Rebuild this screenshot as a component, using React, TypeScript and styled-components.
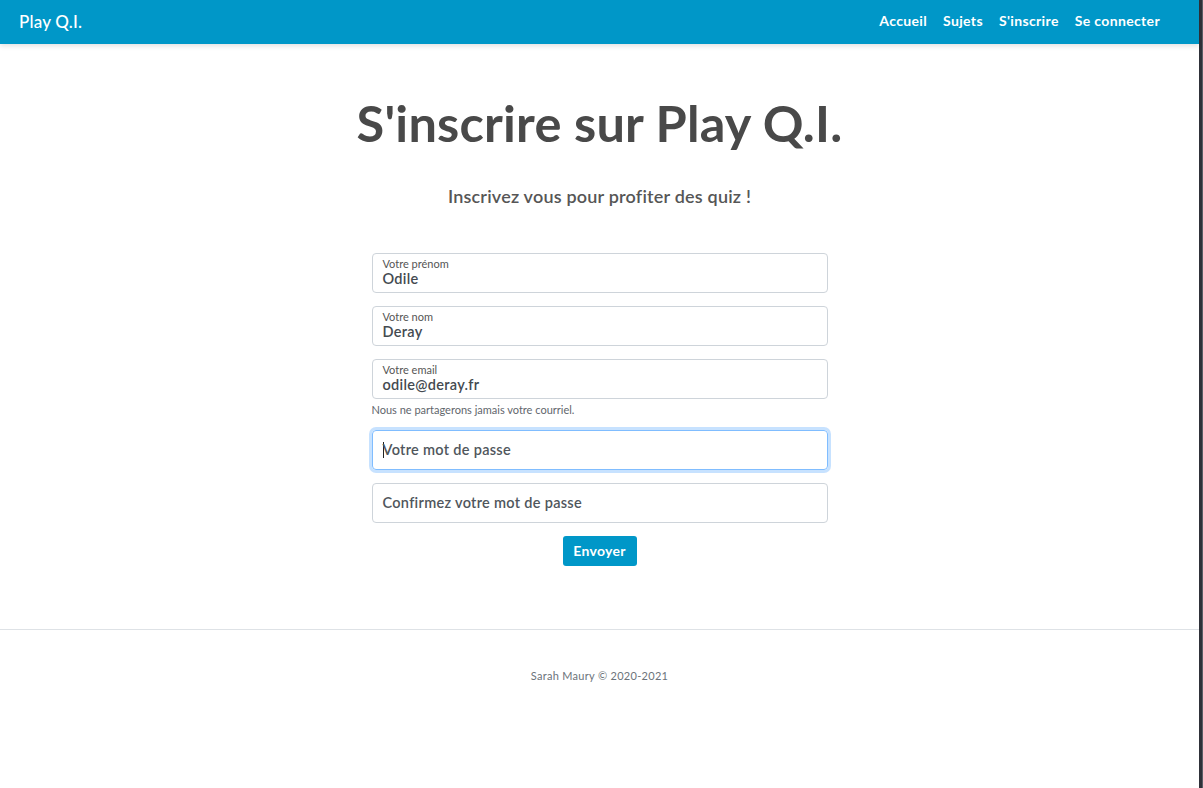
import styled, { createGlobalStyle } from "styled-components";

const GlobalStyle = createGlobalStyle`
  html, body {
    margin: 0;
    padding: 0;
    background: #fff;
  }
  body {
    font-family: Lato, "Open Sans", "Liberation Sans", sans-serif;
    color: #495057;
  }
`;

const Shell = styled.div`
  display: flex;
  min-height: 788px;
`;

const Page = styled.div`
  flex: 1;
  display: flex;
  flex-direction: column;
  min-width: 0;
`;

const Edge = styled.div`
  width: 3px;
  background: #2f3139;
  border-right: 1px solid #5a5d66;
`;

const Navbar = styled.nav`
  box-sizing: border-box;
  height: 44px;
  background: #0097c8;
  display: flex;
  align-items: center;
  justify-content: space-between;
  padding: 0 39px 4px 19px;
  box-shadow: 0 2px 5px rgba(0, 0, 0, 0.12);
  position: relative;
  z-index: 1;
`;

const Brand = styled.a`
  color: #fff;
  font-size: 17px;
  font-weight: 500;
  text-decoration: none;
  letter-spacing: 0.2px;
  margin-top: 3px;
`;

const NavLinks = styled.div`
  display: flex;
  gap: 16px;
`;

const NavLink = styled.a`
  color: #fff;
  font-size: 14px;
  font-weight: 700;
  text-decoration: none;
  letter-spacing: 0.35px;
`;

const Main = styled.main`
  display: flex;
  flex-direction: column;
  align-items: center;
  padding: 51px 0 63px;
`;

const Title = styled.h1`
  margin: 0;
  font-size: 50.5px;
  line-height: 56px;
  font-weight: 700;
  color: #494949;
  letter-spacing: 0.2px;
`;

const Subtitle = styled.p`
  margin: 33px 0 0;
  font-size: 18px;
  line-height: 24px;
  font-weight: 600;
  color: #565656;
  letter-spacing: 0.2px;
`;

const Form = styled.form`
  width: 456px;
  margin-top: 45px;
  display: flex;
  flex-direction: column;
`;

const Group = styled.div<{ $gap?: number }>`
  margin-bottom: ${(p) => p.$gap ?? 13}px;
`;

const Field = styled.div<{ $focused?: boolean }>`
  box-sizing: border-box;
  height: 40px;
  border: 1px solid ${(p) => (p.$focused ? "#80bdff" : "#ced4da")};
  border-radius: 4px;
  padding: 0 10px;
  display: flex;
  flex-direction: column;
  justify-content: center;
  box-shadow: ${(p) =>
    p.$focused ? "0 0 0 3px rgba(0, 123, 255, 0.22)" : "none"};
`;

const SmallLabel = styled.span`
  font-size: 11px;
  line-height: 12px;
  color: #555;
`;

const Value = styled.span`
  font-size: 14.5px;
  line-height: 18px;
  font-weight: 600;
  color: #444a50;
  letter-spacing: 0.3px;
`;

const Placeholder = styled.span`
  display: flex;
  align-items: center;
  font-size: 14.5px;
  line-height: 18px;
  font-weight: 600;
  color: #50565c;
  letter-spacing: 0.3px;
`;

const Caret = styled.span`
  width: 1px;
  height: 16px;
  background: #222;
  margin-right: -1px;
`;

const Help = styled.small`
  display: block;
  margin-top: 4px;
  font-size: 11px;
  line-height: 14px;
  color: #5f666c;
`;

const SubmitButton = styled.button`
  align-self: center;
  width: 74px;
  height: 30px;
  border: 0;
  border-radius: 3px;
  background: #0097c8;
  color: #fff;
  font-family: inherit;
  font-size: 14px;
  font-weight: 700;
  letter-spacing: 0.3px;
  padding: 0 0 2px;
`;

const Footer = styled.footer`
  border-top: 1px solid #dee2e6;
  padding: 38px 0 0;
  text-align: center;
  font-size: 11px;
  line-height: 16px;
  color: #6c737a;
  letter-spacing: 0.3px;
`;

export default function App() {
  return (
    <>
      <GlobalStyle />
      <Shell>
        <Page>
          <Navbar>
            <Brand href="#">Play Q.I.</Brand>
            <NavLinks>
              <NavLink href="#">Accueil</NavLink>
              <NavLink href="#">Sujets</NavLink>
              <NavLink href="#">S'inscrire</NavLink>
              <NavLink href="#">Se connecter</NavLink>
            </NavLinks>
          </Navbar>
          <Main>
            <Title>S'inscrire sur Play Q.I.</Title>
            <Subtitle>Inscrivez vous pour profiter des quiz !</Subtitle>
            <Form onSubmit={(e) => e.preventDefault()}>
              <Group>
                <Field>
                  <SmallLabel>Votre prénom</SmallLabel>
                  <Value>Odile</Value>
                </Field>
              </Group>
              <Group>
                <Field>
                  <SmallLabel>Votre nom</SmallLabel>
                  <Value>Deray</Value>
                </Field>
              </Group>
              <Group>
                <Field>
                  <SmallLabel>Votre email</SmallLabel>
                  <Value>odile@deray.fr</Value>
                </Field>
                <Help>Nous ne partagerons jamais votre courriel.</Help>
              </Group>
              <Group>
                <Field $focused>
                  <Placeholder>
                    <Caret />
                    Votre mot de passe
                  </Placeholder>
                </Field>
              </Group>
              <Group>
                <Field>
                  <Placeholder>Confirmez votre mot de passe</Placeholder>
                </Field>
              </Group>
              <SubmitButton type="submit">Envoyer</SubmitButton>
            </Form>
          </Main>
          <Footer>Sarah Maury © 2020-2021</Footer>
        </Page>
        <Edge />
      </Shell>
    </>
  );
}
